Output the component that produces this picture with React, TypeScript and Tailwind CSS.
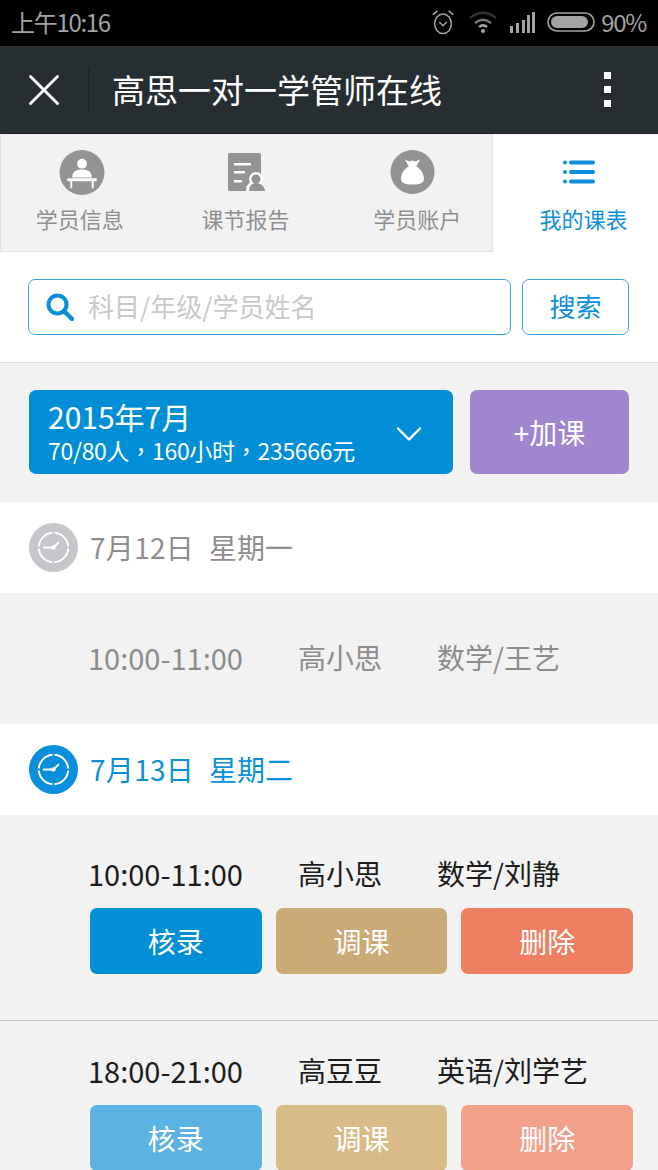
import React from 'react'
import { ChevronDown, X } from 'lucide-react'

const FONT = "font-['Noto_Sans_CJK_SC','Noto_Sans',sans-serif]"

const StudentIcon = () => (
  <svg width="46" height="45" viewBox="0 0 46 46">
    <circle cx="23" cy="23" r="23" fill="#939393" />
    <circle cx="23" cy="14" r="5" fill="#fff" />
    <path d="M13 28c0-6 4-8 10-8s10 2 10 8z" fill="#fff" />
    <path d="M8 29h30v3h-3v7h-2v-7H13v7h-2v-7H8z" fill="#fff" />
  </svg>
)

const ReportIcon = () => (
  <svg width="37" height="38" viewBox="0 0 37 38">
    <rect x="0" y="0" width="33" height="38" rx="2" fill="#939393" />
    <path d="M6 10h17v2.500H6zM6 18h11v2.500H6zM6 27h8v2.500H6z" fill="#fff" />
    <circle cx="28" cy="26" r="7" fill="#fff" />
    <path d="M18 38c0-7 4-10 10-10s9 3 9 10z" fill="#fff" />
    <circle cx="28" cy="26" r="4.500" fill="#939393" />
    <path d="M21 38c0-5 3-8 7-8s9 3 9 8z" fill="#939393" />
  </svg>
)

const BagIcon = () => (
  <svg width="45" height="44" viewBox="0 0 46 46">
    <circle cx="23" cy="23" r="23" fill="#939393" />
    <path d="M15 10l5 2 3-1 3 1 5-2-4 7c5 3 8 8 8 13 0 4-3 6-12 6s-12-2-12-6c0-5 3-10 8-13z" fill="#fff" />
  </svg>
)

const ListIcon = () => (
  <svg width="32" height="24" viewBox="0 0 32 24" fill="#0a8fdc">
    <circle cx="2" cy="2.500" r="2" />
    <circle cx="2" cy="12" r="2" />
    <circle cx="2" cy="21.500" r="2" />
    <rect x="6" y="0.500" width="26" height="4" rx="2" />
    <rect x="6" y="10" width="26" height="4" rx="2" />
    <rect x="6" y="19.500" width="26" height="4" rx="2" />
  </svg>
)

const ClockBadge = ({ color }: { color: string }) => (
  <svg width="49" height="49" viewBox="0 0 50 50">
    <circle cx="25" cy="25" r="25" fill={color} />
    <circle cx="25" cy="25" r="15" fill="none" stroke="#fff" strokeWidth="2" />
    <path d="M25 9v4M25 37v4M9 25h4M37 25h4" stroke={color} strokeWidth="2" />
    <path d="M15 25h10l5-5" fill="none" stroke="#fff" strokeWidth="2" strokeLinecap="round" />
    <circle cx="25" cy="25" r="2.200" fill="#fff" />
  </svg>
)

const tabs = [
  { label: '学员信息', icon: <StudentIcon />, box: 'w-[158px]', iconBox: 'ml-[4px]' },
  { label: '课节报告', icon: <ReportIcon />, box: 'w-[174px]', iconBox: 'ml-[2px]' },
  { label: '学员账户', icon: <BagIcon />, box: 'ml-[10px] w-[150px]', iconBox: 'mr-[9px]' },
]

const DateRow = ({ date, week, active }: { date: string; week: string; active?: boolean }) => (
  <div className={`flex h-[91px] shrink-0 items-center bg-white pl-[29px] text-[28px] ${active ? 'text-[#0a8fdc]' : 'text-[#8e8e8e]'}`}>
    <ClockBadge color={active ? '#0a8fdc' : '#c6c6ca'} />
    <span className="mb-[2px] ml-[12px] w-[119px] tracking-[0.3px]">{date}</span>
    <span className="mb-[2px]">{week}</span>
  </div>
)

const LessonText = ({ time, name, course, muted }: { time: string; name: string; course: string; muted?: boolean }) => (
  <div className={`flex items-center pl-[88px] text-[28px] leading-[40px] ${muted ? 'text-[#8c8c8c]' : 'text-[#1c1c1c]'}`}>
    <span className="w-[210px] text-[29px]">{time}</span>
    <span className="w-[139px]">{name}</span>
    <span>{course}</span>
  </div>
)

const ActionButtons = ({ colors }: { colors: string[] }) => {
  const labels = ['核录', '调课', '删除']
  return (
    <div className="mt-[15px] ml-[90px] flex w-[543px] gap-[14px]">
      {labels.map((label, i) => (
        <div
          key={label}
          className={`flex h-[66px] w-[172px] items-center justify-center rounded-[7px] pb-[1px] text-[28px] text-white ${colors[i]}`}
        >
          {label}
        </div>
      ))}
    </div>
  )
}

export default function App() {
  return (
    <div className={`flex h-[1170px] w-[658px] flex-col overflow-hidden bg-white ${FONT}`}>
      {/* status bar */}
      <div className="flex h-[46px] shrink-0 items-center justify-between bg-black pb-[2px] pl-[11px] pr-[12px] text-[#a3a3a3]">
        <span className="text-[24px] tracking-[-1.300px]">上午10:16</span>
        <div className="flex items-center">
          <svg width="26" height="26" viewBox="0 0 26 28" fill="none" stroke="#a3a3a3" strokeWidth="1.600">
            <ellipse cx="13" cy="16" rx="9" ry="10.500" />
            <path d="M9 14l4 4 4-4M2 6l5-4M24 6l-5-4" />
          </svg>
          <svg className="ml-[13px]" width="28" height="22" viewBox="0 0 28 22" fill="none" strokeWidth="2.500">
            <path d="M1 7c8-7 18-7 26 0" stroke="#333" />
            <path d="M6 12c5-4 11-4 16 0" stroke="#777" />
            <path d="M10 16c2.500-2 5.500-2 8 0" stroke="#a3a3a3" />
            <circle cx="14" cy="20" r="2" fill="#a3a3a3" stroke="none" />
          </svg>
          <svg className="ml-[13px]" width="26" height="22" viewBox="0 0 26 22" fill="#a3a3a3">
            <path d="M0 15h3v7H0zM6 12h3v10H6zM12 9h3v13h-3zM17 4h3v18h-3zM22 1h3v21h-3z" />
          </svg>
          <svg className="ml-[11px]" width="48" height="20" viewBox="0 0 48 20">
            <rect x="1" y="1" width="46" height="18" rx="9" fill="none" stroke="#a3a3a3" strokeWidth="1.600" />
            <rect x="4" y="4" width="37" height="12" rx="6" fill="#a3a3a3" />
          </svg>
          <span className="ml-[6px] text-[24px] tracking-[-1.300px]">90%</span>
        </div>
      </div>

      {/* title bar */}
      <div className="flex h-[88px] shrink-0 items-center border-b border-[#1a2023] bg-[#262e32]">
        <div className="flex h-[44px] w-[89px] items-center justify-center border-r border-[#1a2023]">
          <X size={54} strokeWidth={1.300} className="text-white" />
        </div>
        <span className="ml-[23px] text-[33px] text-white">高思一对一学管师在线</span>
        <div className="ml-auto mr-[47px] flex flex-col gap-[7px]">
          <div className="h-[7px] w-[7px] bg-white" />
          <div className="h-[7px] w-[7px] bg-white" />
          <div className="h-[7px] w-[7px] bg-white" />
        </div>
      </div>

      {/* tabs */}
      <div className="flex h-[118px] shrink-0">
        <div className="flex w-[493px] border border-t-0 border-[#e3e3e3] bg-[#f2f2f2]">
          {tabs.map(tab => (
            <div key={tab.label} className={`flex flex-col items-center pt-[14px] ${tab.box}`}>
              <div className={`flex h-[48px] items-center ${tab.iconBox}`}>{tab.icon}</div>
              <span className="mt-[6px] text-[22px] leading-[32px] text-[#8f8f8f]">{tab.label}</span>
            </div>
          ))}
        </div>
        <div className="flex flex-1 flex-col items-center pl-[16px] pt-[14px]">
          <div className="mr-[10px] flex h-[48px] items-center"><ListIcon /></div>
          <span className="mt-[6px] text-[22px] leading-[32px] text-[#0a8fdc]">我的课表</span>
        </div>
      </div>

      {/* search */}
      <div className="flex h-[111px] shrink-0 items-center gap-[11px] border-b border-[#dcdcdc] pl-[28px]">
        <div className="flex h-[56px] w-[483px] items-center rounded-[7px] border border-[#3ba4de] pl-[17px]">
          <svg width="28" height="28" viewBox="0 0 28 28" fill="none" stroke="#0a8fdc">
            <circle cx="11.500" cy="11.500" r="9" strokeWidth="4" />
            <path d="M18 18l8 8" strokeWidth="4.500" strokeLinecap="round" />
          </svg>
          <span className="ml-[14px] pb-[4px] text-[26px] text-[#c9c9c9]">科目/年级/学员姓名</span>
        </div>
        <div className="flex h-[56px] w-[107px] items-center justify-center rounded-[7px] border border-[#3ba4de] pb-[4px] text-[26px] text-[#0a8fdc]">
          搜索
        </div>
      </div>

      {/* month summary */}
      <div className="flex h-[139px] shrink-0 items-center gap-[17px] bg-[#f2f2f2] pb-[1px] pl-[29px]">
        <div className="flex h-[84px] w-[424px] items-center justify-between rounded-[7px] bg-[#008fd7] pl-[19px] pr-[22px] text-white">
          <div className="flex flex-col">
            <span className="text-[30px] leading-[36px]">2015年7月</span>
            <span className="font-['Noto_Sans_CJK_TC',sans-serif] text-[23px] leading-[32px] tracking-[-0.300px]">70/80人，160小时，235666元</span>
          </div>
          <ChevronDown size={44} strokeWidth={1.300} className="mt-[4px]" />
        </div>
        <div className="flex h-[84px] w-[159px] items-center justify-center rounded-[7px] bg-[#a085cf] text-[28px] text-white">
          +加课
        </div>
      </div>

      <DateRow date="7月12日" week="星期一" />
      <div className="flex h-[131px] shrink-0 items-center bg-[#f2f2f2] pb-[3px]">
        <LessonText time="10:00-11:00" name="高小思" course="数学/王艺" muted />
      </div>

      <DateRow date="7月13日" week="星期二" active />
      <div className="flex-1 bg-[#f2f2f2]">
        <div className="h-[206px] border-b border-[#c4c4c8] pt-[38px]">
          <LessonText time="10:00-11:00" name="高小思" course="数学/刘静" />
          <ActionButtons colors={['bg-[#008fd7]', 'bg-[#cbaa76]', 'bg-[#ee7f60]']} />
        </div>
        <div className="pt-[29px]">
          <LessonText time="18:00-21:00" name="高豆豆" course="英语/刘学艺" />
          <ActionButtons colors={['bg-[#5bb3e1]', 'bg-[#d9bb88]', 'bg-[#f3a089]']} />
        </div>
      </div>
    </div>
  )
}
